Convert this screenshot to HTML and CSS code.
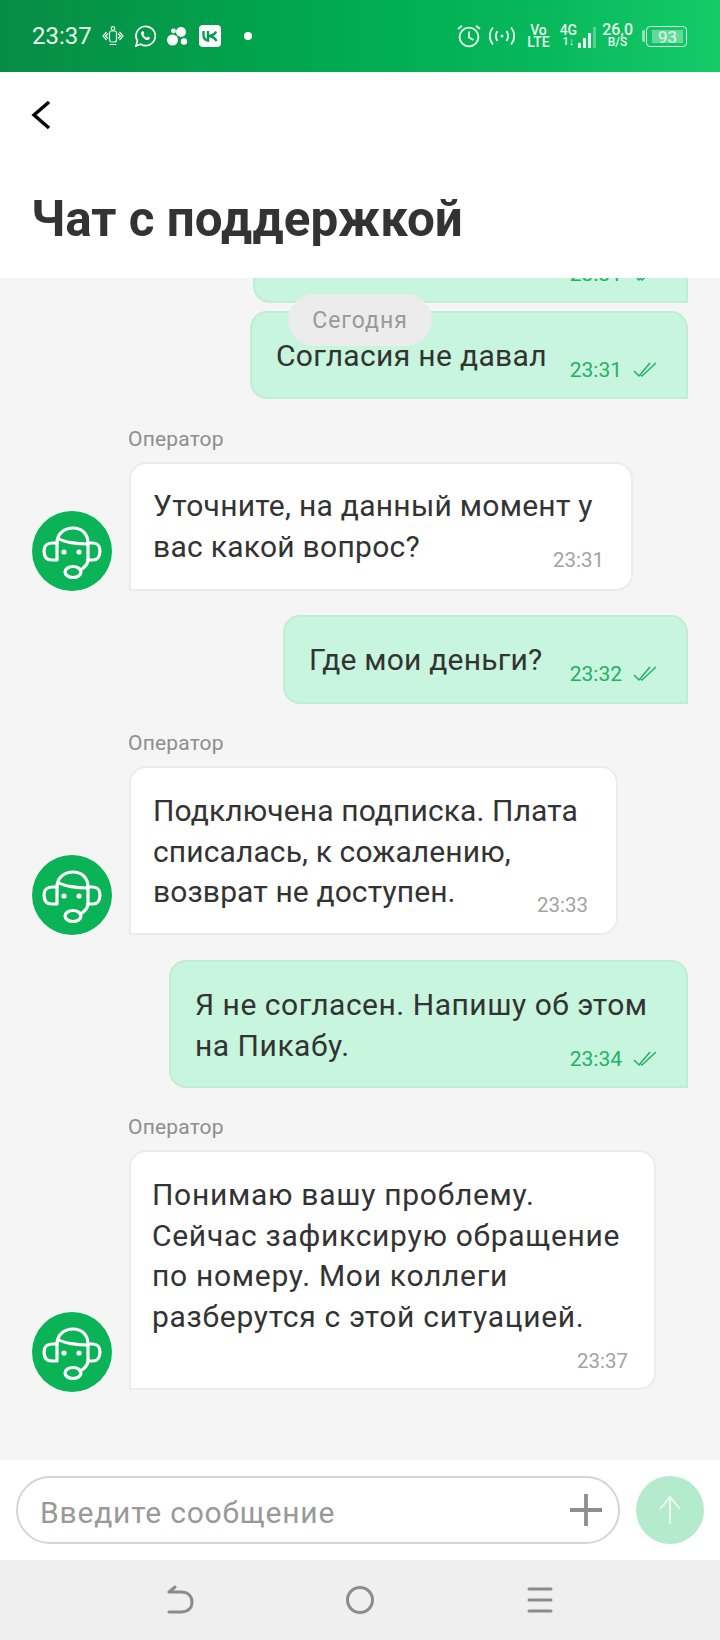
FILE: index.html
```html
<!DOCTYPE html>
<html lang="en">
<head>
    <meta charset="UTF-8">
    <meta name="viewport" content="width=device-width, initial-scale=1.0">
    <title>Чат с поддержкой</title>
    <link rel="stylesheet" href="styles.css">
</head>
<body>

    <svg class="defs" width="0" height="0">
        <symbol id="operator" viewBox="0 0 80 80">
            <g fill="none" stroke="#fff" stroke-width="3.2" stroke-linecap="round" stroke-linejoin="round">
                <path d="M25 32C25 23 32 17 41 17C50 17 56 23 56 32V48C56 53 52 57 48 59"/>
                <path d="M27 28C32 31 45 33 55 33"/>
                <path d="M25 32H20C15 32 12 35 12 40C12 46 15 49 20 49H25Z"/>
                <path d="M56 32H61C65 32 68 35 68 40C68 46 65 49 61 49H56"/>
                <ellipse cx="41" cy="61" rx="8" ry="5.5"/>
            </g>
            <circle cx="32" cy="41" r="2.6" fill="#fff"/>
            <circle cx="47" cy="41" r="2.6" fill="#fff"/>
        </symbol>
        <symbol id="checks" viewBox="0 0 24 16">
            <path d="M1 9L6 14L17 1M8 13L9 14L23 1" fill="none" stroke="#25b068" stroke-width="1.5"/>
        </symbol>
    </svg>

    <!-- Status bar -->
    <div class="status-bar">
        <div class="status-left">
            <span class="clock">23:37</span>
            <svg class="st-icon" width="22" height="22" viewBox="0 0 22 22" fill="none" stroke="#e6f7ec" stroke-width="1.2">
                <rect x="7.5" y="6" width="7" height="11" rx="2"/>
                <circle cx="11" cy="3.5" r="1.8"/>
                <path d="M4.5 7L1 11L4.5 15M6 8.5L3.5 11L6 13.5M17.5 7L21 11L17.5 15M16 8.5L18.5 11L16 13.5M7.5 19.5H14.5"/>
            </svg>
            <svg class="st-icon" width="22" height="22" viewBox="0 0 22 22">
                <path d="M2 21L3.4 15.8A9.6 9.6 0 1 1 6.8 19.2Z" fill="none" stroke="#fff" stroke-width="1.7"/>
                <path d="M7.8 6.5C6.6 7.5 7 10 9 12.4C11 14.6 13.6 15.6 15 14.6C15.8 14 16 13 15.8 12.6L13.8 11.6L12.8 12.8C11.4 12.3 10 10.9 9.4 9.4L10.4 8.4L9.5 6.4C9 6 8.2 6.2 7.8 6.5Z" fill="#fff"/>
            </svg>
            <svg class="st-icon bubbles" width="22" height="22" viewBox="0 0 22 22" fill="#fff">
                <circle cx="6.5" cy="15" r="5.5"/>
                <circle cx="15" cy="7" r="5"/>
                <circle cx="18" cy="16.5" r="3.2"/>
                <circle cx="7.5" cy="6" r="2.4"/>
            </svg>
            <span class="vk">
                <svg width="16" height="12" viewBox="0 0 16 12" fill="none" stroke="#0a9a4d" stroke-width="2.4">
                    <path d="M1.5 1V5C1.5 8 3 10 6 10.5V1"/>
                    <path d="M14 1.5C13 4 11 5.5 7 6C11 6.5 13 8 14.5 11"/>
                </svg>
            </span>
            <span class="dot"></span>
        </div>
        <div class="status-right">
            <svg class="alarm" width="24" height="24" viewBox="0 0 24 24" fill="none" stroke="#e6f7ec" stroke-width="1.9">
                <circle cx="12" cy="13" r="9.4"/>
                <path d="M12 7.5V13.5L16.5 16"/>
                <path d="M1 5L5 1.8M23 5L19 1.8" stroke-width="1.8"/>
            </svg>
            <svg class="waves" width="28" height="20" viewBox="0 0 28 20" fill="none" stroke="#e6f7ec" stroke-width="1.8">
                <path d="M5 1.5C0.8 6 0.8 14 5 18.5M9.5 5C7.5 8 7.5 12 9.5 15M23 1.5C27.2 6 27.2 14 23 18.5M18.5 5C20.5 8 20.5 12 18.5 15"/>
                <circle cx="14" cy="10" r="1.5" fill="#e6f7ec" stroke="none"/>
            </svg>
            <span class="volte"><span>Vo</span><span>LTE</span></span>
            <span class="net">
                <span class="net-text"><span>4G</span><span class="arrows">1↓</span></span>
                <span class="bars">
                    <i class="bar-1"></i><i class="bar-2"></i><i class="bar-3"></i><i class="bar-4"></i>
                </span>
            </span>
            <span class="speed"><span>26,0</span><span class="unit">B/S</span></span>
            <span class="battery">
                <span class="battery-tip"></span>
                <span class="battery-body"><span class="battery-fill">93</span></span>
            </span>
        </div>
    </div>

    <!-- Header -->
    <header class="header">
        <svg class="back" width="22" height="32" viewBox="0 0 22 32" fill="none" stroke="#000" stroke-width="3.4">
            <path d="M19 3L4 16L19 29"/>
        </svg>
        <h1>Чат с поддержкой</h1>
    </header>

    <!-- Messages -->
    <main class="chat">
        <div class="date-pill">Сегодня</div>

        <div class="row-out first">
            <div class="bubble out w-first">
                <div class="meta meta-only">23:31 <svg width="24" height="16"><use href="#checks"/></svg></div>
            </div>
        </div>

        <div class="bubble out w-a">
            <div class="single">
                <span class="text">Согласия не давал</span>
                <span class="meta">23:31 <svg width="24" height="16"><use href="#checks"/></svg></span>
            </div>
        </div>

        <div class="row-in gap-a">
            <svg class="avatar" width="80" height="80"><circle cx="40" cy="40" r="40" fill="#0ab356"/><use href="#operator" width="80" height="80"/></svg>
            <div class="col">
                <div class="who">Оператор</div>
                <div class="bubble in w-b">
                    <div class="text">Уточните, на данный момент у<br>вас какой вопрос?</div>
                    <div class="time t-b">23:31</div>
                </div>
            </div>
        </div>

        <div class="bubble out w-c gap-b">
            <div class="single">
                <span class="text">Где мои деньги?</span>
                <span class="meta">23:32 <svg width="24" height="16"><use href="#checks"/></svg></span>
            </div>
        </div>

        <div class="row-in gap-c">
            <svg class="avatar" width="80" height="80"><circle cx="40" cy="40" r="40" fill="#0ab356"/><use href="#operator" width="80" height="80"/></svg>
            <div class="col">
                <div class="who">Оператор</div>
                <div class="bubble in w-d">
                    <div class="text">Подключена подписка. Плата<br>списалась, к сожалению,<br>возврат не доступен.</div>
                    <div class="time t-d">23:33</div>
                </div>
            </div>
        </div>

        <div class="bubble out w-e gap-d">
            <div class="text">Я не согласен. Напишу об этом<br>на Пикабу.</div>
            <div class="meta meta-end">23:34 <svg width="24" height="16"><use href="#checks"/></svg></div>
        </div>

        <div class="row-in gap-c">
            <svg class="avatar avatar-low" width="80" height="80"><circle cx="40" cy="40" r="40" fill="#0ab356"/><use href="#operator" width="80" height="80"/></svg>
            <div class="col">
                <div class="who">Оператор</div>
                <div class="bubble in w-f">
                    <div class="text">Понимаю вашу проблему.<br>Сейчас зафиксирую обращение<br>по номеру. Мои коллеги<br>разберутся с этой ситуацией.</div>
                    <div class="time t-f">23:37</div>
                </div>
            </div>
        </div>
    </main>

    <!-- Input -->
    <div class="composer">
        <div class="field">
            <span class="placeholder">Введите сообщение</span>
            <svg width="34" height="34" viewBox="0 0 34 34" stroke="#8e8e8e" stroke-width="3.8">
                <path d="M17 1V33M1 17H33"/>
            </svg>
        </div>
        <div class="send">
            <svg width="22" height="30" viewBox="0 0 22 30" fill="none" stroke="#f2fbf6" stroke-width="1.8">
                <path d="M11 29V2M1 14L11 2L21 14"/>
            </svg>
        </div>
    </div>

    <!-- System navigation -->
    <nav class="nav-bar">
        <svg width="30" height="30" viewBox="0 0 30 30" fill="none" stroke="#8b8b8b" stroke-width="3" stroke-linecap="round">
            <path d="M4 7H16C23 7 27 11 27 17C27 23 23 27 16 27H4M4 7L10 2"/>
        </svg>
        <svg width="30" height="30" viewBox="0 0 30 30" fill="none" stroke="#8b8b8b" stroke-width="3">
            <circle cx="15" cy="15" r="12.5"/>
        </svg>
        <svg width="30" height="30" viewBox="0 0 30 30" fill="none" stroke="#8b8b8b" stroke-width="3" stroke-linecap="round">
            <path d="M4 4H26M4 15H26M4 26H26"/>
        </svg>
    </nav>

</body>
</html>
```

FILE: styles.css
```css
/* Basic Reset */
* {
    margin: 0;
    padding: 0;
    box-sizing: border-box;
}

body {
    font-family: 'Roboto', sans-serif;
    width: 720px;
    height: 1640px;
    display: flex;
    flex-direction: column;
    overflow: hidden;
    background-color: #f5f5f5;
    color: #333;
}

.defs {
    position: absolute;
}

/* Status bar */
.status-bar {
    height: 72px;
    flex-shrink: 0;
    padding: 0 33px 0 32px;
    display: flex;
    align-items: center;
    justify-content: space-between;
    color: #e6f7ec;
    background: linear-gradient(90deg, #078c45 0%, #00a94f 45%, #07b85b 75%, #14cb68 100%);
}

.status-left {
    display: flex;
    align-items: center;
}

.clock {
    font-size: 24px;
    width: 70px;
}

.st-icon {
    margin-right: 10px;
}

.st-icon.bubbles {
    margin-right: 11px;
}

.vk {
    width: 22px;
    height: 22px;
    border-radius: 4px;
    background-color: #fff;
    display: flex;
    align-items: center;
    justify-content: center;
}

.dot {
    width: 8px;
    height: 8px;
    border-radius: 50%;
    background-color: #fff;
    margin-left: 23px;
}

.status-right {
    display: flex;
    align-items: center;
}

.waves {
    margin-left: 7px;
}

.volte {
    margin-left: 11px;
    display: flex;
    flex-direction: column;
    align-items: center;
    font-size: 14px;
    font-weight: 500;
    line-height: 12px;
}

.net {
    margin-left: 10px;
    display: flex;
    align-items: flex-end;
    gap: 1px;
}

.net-text {
    display: flex;
    flex-direction: column;
    align-items: center;
    font-size: 14px;
    font-weight: 500;
    line-height: 12px;
}

.arrows {
    font-size: 11px;
}

.bars {
    display: flex;
    align-items: flex-end;
    gap: 2px;
    height: 21px;
}

.bars i {
    display: block;
    width: 3px;
    background-color: #e6f7ec;
}

.bars .bar-1 {
    height: 5px;
}

.bars .bar-2 {
    height: 10px;
}

.bars .bar-3 {
    height: 15px;
}

.bars .bar-4 {
    height: 21px;
    opacity: 0.35;
}

.speed {
    margin-left: 6px;
    display: flex;
    flex-direction: column;
    align-items: center;
    font-size: 16px;
    font-weight: 500;
    line-height: 13px;
}

.unit {
    font-size: 12px;
}

.battery {
    margin-left: 9px;
    display: flex;
    align-items: center;
    gap: 1px;
}

.battery-tip {
    width: 3px;
    height: 12px;
    border-radius: 2px 0 0 2px;
    background-color: rgba(255, 255, 255, 0.55);
}

.battery-body {
    width: 41px;
    height: 21px;
    padding: 3px 3px 3px 5px;
    border: 1.5px solid #d9f3e3;
    border-radius: 4px;
    display: flex;
}

.battery-fill {
    flex: 1;
    font-size: 17px;
    line-height: 14px;
    text-align: center;
    background-color: rgba(255, 255, 255, 0.35);
}

/* Header */
.header {
    height: 206px;
    flex-shrink: 0;
    padding: 27px 0 0 30px;
    background-color: #fff;
}

.back {
    display: block;
}

.header h1 {
    margin-top: 58px;
    margin-left: 1px;
    font-size: 49.4px;
    line-height: 60px;
    font-weight: 700;
    color: #333;
}

/* Messages */
.chat {
    height: 1182px;
    flex-shrink: 0;
    position: relative;
    overflow: hidden;
    padding: 0 32px;
    display: flex;
    flex-direction: column;
}

.date-pill {
    position: absolute;
    top: 16px;
    left: 288px;
    width: 144px;
    height: 52px;
    border-radius: 26px;
    background-color: #ececec;
    color: #999;
    font-size: 23px;
    letter-spacing: 1px;
    display: flex;
    align-items: center;
    justify-content: center;
}

.bubble {
    border: 2px solid #bfeed5;
    border-radius: 17px;
    flex-shrink: 0;
}

.bubble.out {
    align-self: flex-end;
    background-color: #c7f5dd;
    border-bottom-right-radius: 0;
    padding: 23px 24px 0;
}

.bubble.in {
    background-color: #fff;
    border-color: #ececec;
    border-bottom-left-radius: 0;
    padding: 22px 24px 0 22px;
}

.row-out.first {
    height: 33px;
    margin-top: -8px;
    display: flex;
    justify-content: flex-end;
    align-items: flex-end;
    flex-shrink: 0;
}

.text {
    font-size: 30px;
    line-height: 40.5px;
    color: #333;
}

.single {
    display: flex;
    align-items: flex-start;
    justify-content: space-between;
}

.meta {
    display: flex;
    align-items: center;
    gap: 11px;
    padding-right: 5px;
    height: 25px;
    margin-top: 21px;
    font-size: 21px;
    color: #25b068;
}

.meta-end {
    justify-content: flex-end;
    margin-top: -20px;
}

.meta-only {
    justify-content: flex-end;
}

.time {
    font-size: 20.5px;
    color: #a3a3a3;
    text-align: right;
}

/* Incoming rows */
.row-in {
    display: flex;
    align-items: flex-end;
    gap: 17px;
    flex-shrink: 0;
}

.avatar {
    flex-shrink: 0;
}

.avatar-low {
    margin-bottom: -2px;
}

.who {
    font-size: 21px;
    letter-spacing: 0.2px;
    line-height: 24px;
    color: #8e8e8e;
    margin-bottom: 11px;
    margin-left: -1px;
}

/* Per-message sizes (the text in the shot is not evenly spaced) */
.w-first {
    width: 435px;
    height: 88px;
}

.w-a {
    width: 438px;
    height: 88px;
    margin-top: 8px;
}

.w-a .text {
    letter-spacing: 0.34px;
}

.w-b {
    width: 504px;
    height: 129px;
}

.w-b .text {
    letter-spacing: 0.27px;
}

.t-b {
    margin-top: -19px;
    padding-right: 3px;
}

.w-c {
    width: 405px;
    height: 89px;
}

.w-c .text {
    letter-spacing: 0.22px;
}

.bubble.in.w-d {
    width: 489px;
    height: 169px;
    padding-top: 23px;
}

.w-d .text {
    letter-spacing: 0.12px;
}

.t-d {
    margin-top: -20px;
    padding-right: 4px;
}

.w-e {
    width: 519px;
    height: 128px;
}

.w-e .text {
    letter-spacing: 0.52px;
}

.bubble.in.w-f {
    width: 527px;
    height: 240px;
    padding-top: 23px;
    padding-left: 21px;
}

.w-f .text {
    letter-spacing: 0.71px;
}

.t-f {
    margin-top: 12px;
    padding-right: 2px;
}

.gap-a {
    margin-top: 28px;
}

.gap-b {
    margin-top: 24px;
}

.gap-c {
    margin-top: 27px;
}

.gap-d {
    margin-top: 25px;
}

/* Composer */
.composer {
    height: 100px;
    flex-shrink: 0;
    padding: 16px;
    background-color: #fff;
    display: flex;
    align-items: center;
    gap: 16px;
}

.field {
    width: 604px;
    height: 68px;
    border: 2px solid #d5d5d5;
    border-radius: 34px;
    padding: 0 15px 0 22px;
    display: flex;
    align-items: center;
    justify-content: space-between;
}

.placeholder {
    font-size: 30px;
    letter-spacing: 0.8px;
    color: #999;
    margin-top: 4px;
}

.send {
    width: 68px;
    height: 68px;
    border-radius: 50%;
    background-color: #b5ebcd;
    display: flex;
    align-items: center;
    justify-content: center;
}

/* System navigation */
.nav-bar {
    height: 80px;
    flex-shrink: 0;
    background-color: #efefef;
    display: flex;
    align-items: center;
    justify-content: center;
    gap: 150px;
}
```
